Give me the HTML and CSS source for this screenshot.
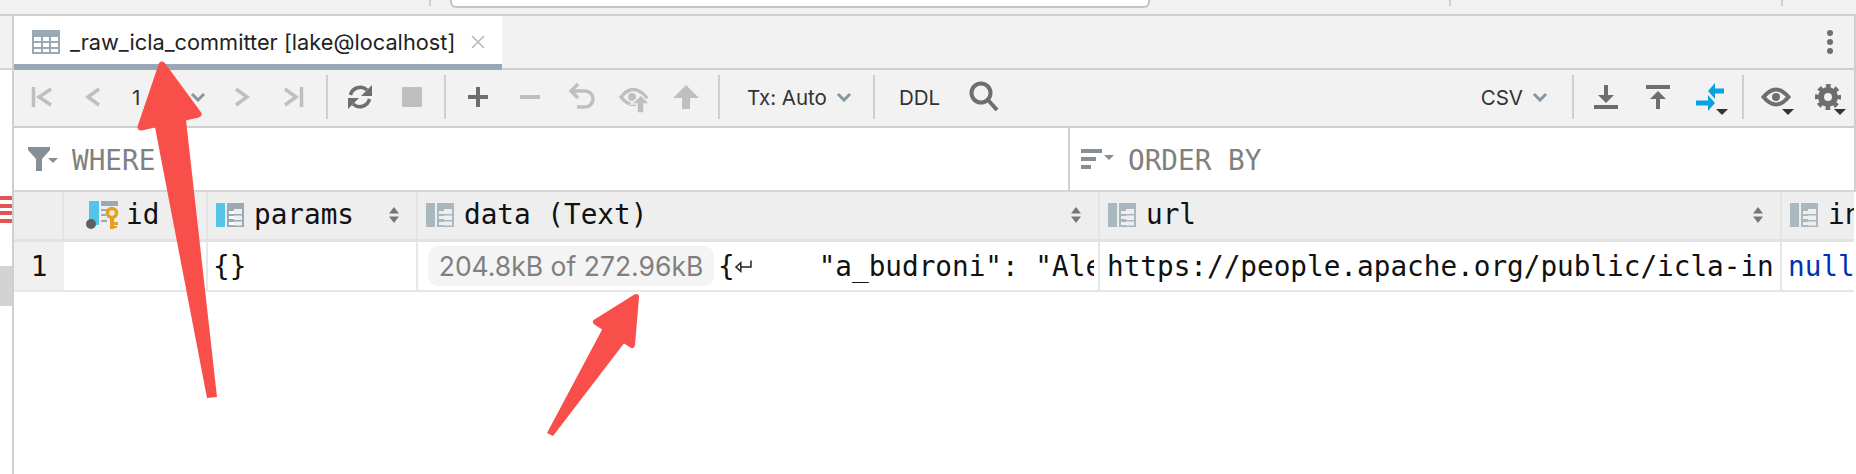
FILE: index.html
```html
<!DOCTYPE html>
<html lang="en">
  <head>
    <meta charset="UTF-8" />
    <title>_raw_icla_committer</title>
    <link rel="stylesheet" href="styles.css">
  </head>
  <body>
    <div class="topstrip">
      <span class="tick tick-a"></span>
      <div class="topinput"></div>
      <span class="tick tick-b"></span>
      <span class="tick tick-c"></span>
    </div>
    <div class="workspace">
      <div class="edge">
        <div class="edge-top"></div>
        <div class="marks"><i></i><i></i><i></i><i></i></div>
        <div class="edge-block"></div>
      </div>
      <div class="panel">
        <div class="tabbar">
          <div class="tab">
            <svg class="tab-icon" viewBox="0 0 28 24" width="28" height="24"><path fill="#9aa9b3" fill-rule="evenodd" d="M0 0h28v24H0zM2 7v4h7V7zm9 0v4h6V7zm8 0v4h7V7zM2 13v4h7v-4zm9 0v4h6v-4zm8 0v4h7v-4zM2 19v3h7v-3zm9 0v3h6v-3zm8 0v3h7v-3z"/></svg>
            <span class="tab-title">_raw_icla_committer [lake@localhost]</span>
            <svg viewBox="0 0 16 14" width="16" height="14"><path d="M2 1l12 12M14 1L2 13" stroke="#b9b9b9" stroke-width="1.6" fill="none"/></svg>
          </div>
          <svg class="more" viewBox="0 0 6 24" width="6" height="24"><circle cx="3" cy="3" r="3"/><circle cx="3" cy="12" r="3"/><circle cx="3" cy="21" r="3"/></svg>
        </div>

        <div class="toolbar">
          <span class="btn"><svg viewBox="0 0 40 40"><path class="off-line" d="M30 12l-12 8 12 8M12.500 10v20"/></svg></span>
          <span class="btn"><svg viewBox="0 0 40 40"><path class="off-line" d="M26 12l-11 8 11 8"/></svg></span>
          <span class="pager">1<svg class="chev" viewBox="0 0 16 10" width="16" height="10"><path d="M2 2l6 6 6-6"/></svg></span>
          <span class="btn"><svg viewBox="0 0 40 40"><path class="off-line" d="M14 12l11 8-11 8"/></svg></span>
          <span class="btn"><svg viewBox="0 0 40 40"><path class="off-line" d="M11 12l11 8-11 8M27.500 10v20"/></svg></span>
          <span class="sep"></span>
          <span class="btn"><svg viewBox="0 0 40 40"><path class="on-line thin" d="M10.500 18A10 10 0 0 1 27 13M29.500 22A10 10 0 0 1 13 27"/><path class="on" d="M32 8v11H21zM8 32V21h11z"/></svg></span>
          <span class="btn"><svg viewBox="0 0 40 40"><rect class="off" x="10" y="10" width="20" height="20"/></svg></span>
          <span class="sep"></span>
          <span class="btn"><svg viewBox="0 0 40 40"><path class="on" d="M18 10h4v8h8v4h-8v8h-4v-8h-8v-4h8z"/></svg></span>
          <span class="btn"><svg viewBox="0 0 40 40"><rect class="off" x="10" y="18" width="20" height="4"/></svg></span>
          <span class="btn"><svg viewBox="0 0 40 40"><path class="off-line" d="M16 7l-7 7 7 7M9 14h14a8 8 0 0 1 0 16h-8"/></svg></span>
          <span class="btn"><svg viewBox="0 0 40 40"><path class="off-line" d="M7 20Q19 5 32 20Q19 35 7 20z"/><circle class="off" cx="18" cy="20" r="4"/><path class="off halo" d="M27 18l9 9h-6v9h-7v-9h-6z"/></svg></span>
          <span class="btn"><svg viewBox="0 0 40 40"><path class="off" d="M20 8l13 13h-9v11h-8V21H7z"/></svg></span>
          <span class="sep"></span>
          <span class="menu menu-tx">Tx: Auto<svg class="chev" viewBox="0 0 16 10" width="16" height="10"><path d="M2 2l6 6 6-6"/></svg></span>
          <span class="sep"></span>
          <span class="menu menu-ddl">DDL</span>
          <span class="btn"><svg viewBox="0 0 40 40"><circle class="on-line" cx="17" cy="16" r="9.500"/><path class="on-line" d="M24 23l9 10"/></svg></span>

          <span class="menu menu-csv">CSV<svg class="chev" viewBox="0 0 16 10" width="16" height="10"><path d="M2 2l6 6 6-6"/></svg></span>
          <span class="sep"></span>
          <span class="btn"><svg viewBox="0 0 40 40"><path class="on" d="M8 28h24v4H8zM18 8h4v10h6l-8 8-8-8h6z"/></svg></span>
          <span class="btn"><svg viewBox="0 0 40 40"><path class="on" d="M8 8h24v4H8zM20 14l8 8h-6v10h-4V22h-6z"/></svg></span>
          <span class="btn"><svg viewBox="0 0 40 40"><path fill="#09a2dd" d="M18 14l7-8v5.500h9v5h-9V22zM25 26l-7 8v-5.500H6v-5h12V18z"/><path class="caret" d="M26 32h12l-6 6z"/></svg></span>
          <span class="sep"></span>
          <span class="btn"><svg viewBox="0 0 40 40"><path class="on-line" d="M7.500 20Q20 5 32.500 20Q20 35 7.500 20z"/><circle class="on" cx="20" cy="20" r="4"/><path class="caret" d="M26 32h12l-6 6z"/></svg></span>
          <span class="btn"><svg viewBox="0 0 40 40"><circle cx="20" cy="20" r="7" fill="none" stroke="#6e6e6e" stroke-width="6"/><circle cx="20" cy="20" r="11" fill="none" stroke="#6e6e6e" stroke-width="4" stroke-dasharray="4.640 4" stroke-dashoffset="2.320"/><path class="caret" d="M26 32h12l-6 6z"/></svg></span>
        </div>

        <div class="filters">
          <div class="filter filter-where">
            <svg viewBox="0 0 32 24" width="32" height="24"><path fill="#848f98" d="M0 0h22v3l-8 9v12H8V12L0 3z"/><path fill="#848f98" d="M20 11h10l-5 5z"/></svg>
            <span>WHERE</span>
          </div>
          <div class="filter filter-order">
            <svg viewBox="0 0 33 20" width="33" height="20"><path fill="#848f98" d="M0 0h21v4H0zM0 8h15v4H0zM0 16h10v4H0zM23 6h10l-5 5z"/></svg>
            <span>ORDER BY</span>
          </div>
        </div>

        <div class="grid">
          <div class="hcell hcell-row"></div>
          <div class="hcell hcell-id">
            <svg viewBox="0 0 34 30" width="34" height="30">
              <rect x="3" y="1" width="10" height="24" fill="#54c5e8"/>
              <path fill="#9aa9b3" d="M15 1h17v5H15zM15 9h7v2h-7zM15 14h5v2h-5zM15 20h6v2h-6z"/>
              <circle cx="5" cy="24" r="5" fill="#5f5f5f"/>
              <circle cx="26" cy="13" r="4.500" fill="none" stroke="#e5a023" stroke-width="3.500"/>
              <path fill="#e5a023" d="M24 17h4v12h-4zM28 22h4v3h-4zM28 26h3v2h-3z"/>
            </svg>
            <span>id</span>
          </div>
          <div class="hcell">
            <svg class="col-icon" viewBox="0 0 28 24" width="28" height="24"><rect width="9" height="24" fill="#54c5e8"/><path fill="#9aa9b3" d="M11 0h17v6H11zM11 6h7v18h-7zM26 6h2v18h-2zM18 11h8v1.500h-8zM18 17h8v1.500h-8zM18 22.500h8V24h-8z"/><path fill="#fff" d="M13 8h5v3h-5zM13 13h5v3h-5zM13 19h5v3h-5z"/></svg>
            <span>params</span>
            <svg class="sort" viewBox="0 0 10 16" width="10" height="16"><path d="M5 0l5 6.500H0zM5 16L0 9.500h10z"/></svg>
          </div>
          <div class="hcell">
            <svg class="col-icon" viewBox="0 0 28 24" width="28" height="24"><rect width="9" height="24" fill="#a9b7bf"/><path fill="#a9b7bf" d="M11 0h17v6H11zM11 6h7v18h-7zM26 6h2v18h-2zM18 11h8v1.500h-8zM18 17h8v1.500h-8zM18 22.500h8V24h-8z"/><path fill="#eee" d="M13 8h5v3h-5zM13 13h5v3h-5zM13 19h5v3h-5z"/></svg>
            <span>data (Text)</span>
            <svg class="sort" viewBox="0 0 10 16" width="10" height="16"><path d="M5 0l5 6.500H0zM5 16L0 9.500h10z"/></svg>
          </div>
          <div class="hcell">
            <svg class="col-icon" viewBox="0 0 28 24" width="28" height="24"><rect width="9" height="24" fill="#a9b7bf"/><path fill="#a9b7bf" d="M11 0h17v6H11zM11 6h7v18h-7zM26 6h2v18h-2zM18 11h8v1.500h-8zM18 17h8v1.500h-8zM18 22.500h8V24h-8z"/><path fill="#eee" d="M13 8h5v3h-5zM13 13h5v3h-5zM13 19h5v3h-5z"/></svg>
            <span>url</span>
            <svg class="sort" viewBox="0 0 10 16" width="10" height="16"><path d="M5 0l5 6.500H0zM5 16L0 9.500h10z"/></svg>
          </div>
          <div class="hcell hcell-last">
            <svg class="col-icon" viewBox="0 0 28 24" width="28" height="24"><rect width="9" height="24" fill="#a9b7bf"/><path fill="#a9b7bf" d="M11 0h17v6H11zM11 6h7v18h-7zM26 6h2v18h-2zM18 11h8v1.500h-8zM18 17h8v1.500h-8zM18 22.500h8V24h-8z"/><path fill="#eee" d="M13 8h5v3h-5zM13 13h5v3h-5zM13 19h5v3h-5z"/></svg>
            <span>in</span>
          </div>

          <div class="cell cell-row">1</div>
          <div class="cell"></div>
          <div class="cell">{}</div>
          <div class="cell cell-data">
            <span class="badge">204.8kB of 272.96kB</span>
            <span class="brace">{</span>
            <svg class="ret" viewBox="0 0 18 14" width="20" height="15"><path d="M15.500 1.500v6H6M6 3.500L1.500 7.500 6 11.500V3.500z" fill="none" stroke="#222" stroke-width="1.400"/></svg>
            <span class="json">"a_budroni": "Ale</span>
          </div>
          <div class="cell cell-url">https://people.apache.org/public/icla-in</div>
          <div class="cell cell-null">null</div>
        </div>
      </div>
    </div>

    <svg class="arrows" viewBox="0 0 1856 474" width="1856" height="474">
      <path d="M162 65L198 114L141 127z" fill="#f94f4b" stroke="#f94f4b" stroke-width="7" stroke-linejoin="round"/>
      <path d="M154 122L207 398L217 397L186 120z" fill="#f94f4b"/>
      <path d="M636 297L596 322L632 345z" fill="#f94f4b" stroke="#f94f4b" stroke-width="6" stroke-linejoin="round"/>
      <path d="M604 326L547 433L553 436L625 342z" fill="#f94f4b"/>
    </svg>
  </body>
</html>
```

FILE: styles.css
```css
* {
  box-sizing: border-box;
}
body {
  margin: 0;
  width: 1856px;
  height: 474px;
  overflow: hidden;
  background: white;
  font-family: "Inter", "Liberation Sans", sans-serif;
  position: relative;
}
.topstrip {
  height: 16px;
  background: #f2f2f2;
  border-bottom: 2px solid #cfcfcf;
  display: flex;
  align-items: flex-start;
}
.tick {
  width: 2px;
  height: 6px;
  background: #cfcfcf;
}
.tick-a {
  margin-left: 429px;
}
.topinput {
  width: 700px;
  height: 8px;
  margin-left: 19px;
  background: white;
  border: 2px solid #c4c4c4;
  border-top: none;
  border-radius: 0 0 6px 6px;
}
.tick-b {
  margin-left: 299px;
}
.tick-c {
  margin-left: 330px;
}
.workspace {
  display: flex;
  height: 458px;
}
.edge {
  width: 12px;
  flex: none;
}
.edge-top {
  height: 54px;
  background: #f2f2f2;
  border-bottom: 2px solid #d6d6d6;
}
.marks {
  margin-top: 126px;
  height: 27px;
  display: flex;
  flex-direction: column;
  justify-content: space-between;
}
.marks i {
  display: block;
  height: 4px;
  background: #e05555;
}
.edge-block {
  margin-top: 43px;
  height: 40px;
  background: #d3d3d3;
}
.panel {
  flex: 1;
  min-width: 0;
  border-left: 2px solid #cfcfcf;
  background: white;
}
.tabbar {
  height: 54px;
  background: #f2f2f2;
  border-bottom: 2px solid #cfcfcf;
  border-right: 2px solid #cfcfcf;
  display: flex;
  justify-content: space-between;
  align-items: flex-start;
}
.tab {
  width: 488px;
  height: 54px;
  padding: 4px 16px 0 18px;
  background: white;
  border-bottom: 6px solid #9aa7b9;
  display: flex;
  align-items: center;
  gap: 10px;
}
.tab-title {
  font-size: 21.75px;
  color: #222;
  width: 384px;
  margin-right: 6px;
  white-space: nowrap;
}
.more {
  margin: 14px 21px 0 0;
  fill: #6e6e6e;
}
.toolbar {
  height: 58px;
  padding: 0 0 2px 1px;
  background: #f2f2f2;
  border-bottom: 2px solid #cfcfcf;
  border-right: 2px solid #cfcfcf;
  display: flex;
  align-items: center;
}
.btn {
  width: 52px;
  height: 40px;
  flex: none;
  display: flex;
  justify-content: center;
}
.btn svg {
  width: 40px;
  height: 40px;
  overflow: visible;
}
.on {
  fill: #6e6e6e;
}
.off {
  fill: #bfbfbf;
}
.on-line {
  fill: none;
  stroke: #6e6e6e;
  stroke-width: 4;
}
.on-line.thin {
  stroke-width: 3.5;
}
.off-line {
  fill: none;
  stroke: #bfbfbf;
  stroke-width: 3.5;
}
.halo {
  stroke: #f2f2f2;
  stroke-width: 1.5;
}
.caret {
  fill: #333;
}
.sep {
  width: 2px;
  height: 44px;
  margin: 0 6px;
  flex: none;
  background: #cfcfcf;
}
.chev {
  fill: none;
  stroke: #86979f;
  stroke-width: 3;
}
.pager {
  width: 97px;
  padding-left: 13px;
  font-size: 20.5px;
  color: #333;
  display: flex;
  align-items: center;
  gap: 50px;
}
.menu {
  font-size: 20.5px;
  color: #333;
  display: flex;
  align-items: center;
  gap: 9px;
  flex: none;
  white-space: nowrap;
}
.menu-tx {
  padding: 0 15px 0 21px;
}
.menu-ddl {
  padding: 0 18px 0 18px;
}
.menu-csv {
  margin-left: auto;
  padding-right: 18px;
}
.filters {
  height: 64px;
  border-right: 2px solid #cfcfcf;
  border-bottom: 2px solid #d6d6d6;
  display: flex;
}
.filter {
  display: flex;
  align-items: center;
  font-family: "DejaVu Sans Mono", monospace;
  font-size: 27.7px;
  color: #808080;
}
.filter span {
  margin-top: 2px;
}
.filter-where {
  width: 1056px;
  flex: none;
  padding-left: 14px;
  gap: 12px;
  border-right: 2px solid #cfcfcf;
}
.filter-order {
  padding-left: 11px;
  gap: 14px;
}
.grid {
  display: grid;
  grid-template-columns: 50px 144px 210px 682px 682px 72px;
  grid-template-rows: 50px 50px;
  font-family: "DejaVu Sans Mono", monospace;
  font-size: 27.7px;
  color: #111;
}
.hcell {
  background: #eeeeee;
  border-right: 2px solid #e4e4e4;
  border-bottom: 3px solid #e2e2e2;
  padding: 0 0 2px 8px;
  display: flex;
  align-items: center;
  gap: 10px;
  overflow: hidden;
  white-space: nowrap;
}
.hcell-id {
  padding-left: 22px;
  gap: 6px;
}
.hcell-last {
  border-right: none;
}
.col-icon {
  flex: none;
}
.sort {
  flex: none;
  margin-left: auto;
  margin-right: 17px;
  fill: #777;
}
.cell {
  display: flex;
  align-items: center;
  padding-left: 5px;
  border-right: 2px solid #e8e8e8;
  border-bottom: 2px solid #e6e6e6;
  overflow: hidden;
  white-space: nowrap;
}
.cell-row {
  background: #f0f0f0;
  justify-content: center;
  padding-left: 0;
  border-right: none;
}
.cell-data {
  padding-left: 10px;
}
.badge {
  flex: none;
  width: 286px;
  height: 40px;
  border-radius: 10px;
  background: #f4f4f4;
  color: #808080;
  font-family: "Inter", "Liberation Sans", sans-serif;
  font-size: 26.5px;
  display: flex;
  align-items: center;
  justify-content: center;
}
.brace {
  margin-left: 4px;
}
.ret {
  flex: none;
  margin-left: -1px;
}
.json {
  margin-left: 65px;
  width: 275px;
  flex: none;
  overflow: hidden;
}
.cell-url {
  padding-left: 7px;
}
.cell-null {
  color: #0033b3;
  padding-left: 6px;
  border-right: none;
}
.arrows {
  position: absolute;
  left: 0;
  top: 0;
  pointer-events: none;
}
```
